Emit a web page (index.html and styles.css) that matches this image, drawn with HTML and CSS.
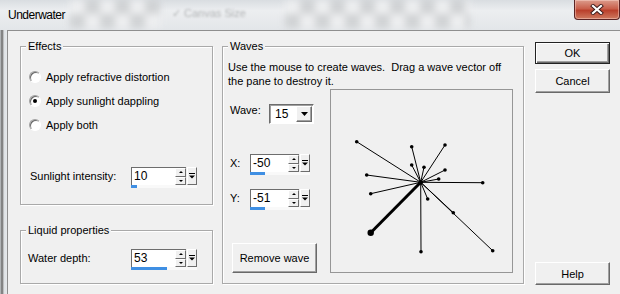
FILE: index.html
```html
<!DOCTYPE html>
<html lang="en">
<head>
  <meta charset="UTF-8" />
  <title>Underwater</title>
  <link rel="stylesheet" href="styles.css">
</head>
<body>
  <div class="window">
    <div class="titlebar">
      <span class="title">Underwater</span>
      <span class="glass glass-a"></span>
      <span class="ghost">&#10003; Canvas Size</span>
      <span class="glass glass-b"></span>
      <span class="close">
        <svg width="14" height="11" viewBox="0 0 14 11">
          <path d="M3 2 L11 9 M11 2 L3 9" stroke="#3a1a1a" stroke-width="4" stroke-linecap="square"/>
          <path d="M3 2 L11 9 M11 2 L3 9" stroke="#fff" stroke-width="2.2" stroke-linecap="square"/>
        </svg>
      </span>
    </div>

    <div class="frame">
      <div class="edge"></div>
      <div class="client">

        <div class="col-left">
          <div class="group effects">
            <span class="group-title">Effects</span>
            <div class="radio-row"><span class="radio"></span>Apply refractive distortion</div>
            <div class="radio-row"><span class="radio checked"></span>Apply sunlight dappling</div>
            <div class="radio-row"><span class="radio"></span>Apply both</div>

            <div class="field-row sunlight">
              <span class="field-label">Sunlight intensity:</span>
              <div class="spin">
                <div class="spin-top">
                  <span class="spin-edit">10</span>
                  <span class="spin-arrows"><i class="up"></i><i class="down"></i></span>
                  <span class="spin-drop">
                    <svg width="6" height="7" viewBox="0 0 6 7"><rect x="0" y="0" width="6" height="1" fill="#000"/><path d="M0 2.5 H6 L3 5.5 Z" fill="#000"/></svg>
                  </span>
                </div>
                <div class="spin-track"><span class="spin-fill" style="width:6px"></span></div>
              </div>
            </div>
          </div>

          <div class="group liquid">
            <span class="group-title">Liquid properties</span>
            <div class="field-row">
              <span class="field-label">Water depth:</span>
              <div class="spin">
                <div class="spin-top">
                  <span class="spin-edit">53</span>
                  <span class="spin-arrows"><i class="up"></i><i class="down"></i></span>
                  <span class="spin-drop">
                    <svg width="6" height="7" viewBox="0 0 6 7"><rect x="0" y="0" width="6" height="1" fill="#000"/><path d="M0 2.5 H6 L3 5.5 Z" fill="#000"/></svg>
                  </span>
                </div>
                <div class="spin-track"><span class="spin-fill" style="width:36px"></span></div>
              </div>
            </div>
          </div>
        </div>

        <div class="group waves">
          <span class="group-title">Waves</span>
          <div class="waves-text">Use the mouse to create waves.&nbsp; Drag a wave vector off<br>the pane to destroy it.</div>
          <div class="waves-body">
            <div class="wave-controls">
              <div class="wave-row">
                <span class="wave-label">Wave:</span>
                <div class="combo">
                  <span class="combo-value">15</span>
                  <span class="combo-btn"><svg width="7" height="4" viewBox="0 0 7 4"><path d="M0 0 H7 L3.5 4 Z" fill="#000"/></svg></span>
                </div>
              </div>

              <div class="xy-row">
                <span class="xy-label">X:</span>
                <div class="spin narrow">
                  <div class="spin-top">
                    <span class="spin-edit">-50</span>
                    <span class="spin-arrows"><i class="up"></i><i class="down"></i></span>
                    <span class="spin-drop">
                      <svg width="6" height="7" viewBox="0 0 6 7"><rect x="0" y="0" width="6" height="1" fill="#000"/><path d="M0 2.5 H6 L3 5.5 Z" fill="#000"/></svg>
                    </span>
                  </div>
                  <div class="spin-track"><span class="spin-fill" style="width:15px"></span></div>
                </div>
              </div>

              <div class="xy-row">
                <span class="xy-label">Y:</span>
                <div class="spin narrow">
                  <div class="spin-top">
                    <span class="spin-edit">-51</span>
                    <span class="spin-arrows"><i class="up"></i><i class="down"></i></span>
                    <span class="spin-drop">
                      <svg width="6" height="7" viewBox="0 0 6 7"><rect x="0" y="0" width="6" height="1" fill="#000"/><path d="M0 2.5 H6 L3 5.5 Z" fill="#000"/></svg>
                    </span>
                  </div>
                  <div class="spin-track"><span class="spin-fill" style="width:15px"></span></div>
                </div>
              </div>

              <button class="btn remove">Remove wave</button>
            </div>

            <div class="pane">
              <svg width="181" height="182" viewBox="0 0 181 182">
                <g stroke="#000" stroke-width="1">
                  <line x1="89.7" y1="92.3" x2="25.7" y2="51.7"/>
                  <line x1="89.7" y1="92.3" x2="80.7" y2="56.7"/>
                  <line x1="89.7" y1="92.3" x2="114" y2="55"/>
                  <line x1="89.7" y1="92.3" x2="80.7" y2="75"/>
                  <line x1="89.7" y1="92.3" x2="93" y2="77.3"/>
                  <line x1="89.7" y1="92.3" x2="114" y2="80"/>
                  <line x1="89.7" y1="92.3" x2="107.7" y2="89"/>
                  <line x1="89.7" y1="92.3" x2="35.7" y2="85"/>
                  <line x1="89.7" y1="92.3" x2="151.7" y2="92.7"/>
                  <line x1="89.7" y1="92.3" x2="39.7" y2="103.7"/>
                  <line x1="89.7" y1="92.3" x2="96.7" y2="109"/>
                  <line x1="89.7" y1="92.3" x2="122.3" y2="122.7"/>
                  <line x1="89.7" y1="92.3" x2="161.7" y2="160.7"/>
                  <line x1="89.7" y1="92.3" x2="90" y2="161.7"/>
                  <line x1="89.7" y1="92.3" x2="39.7" y2="142.7" stroke-width="3"/>
                </g>
                <g fill="#000">
                  <circle cx="89.7" cy="92.3" r="2.2"/>
                  <circle cx="25.7" cy="51.7" r="1.8"/>
                  <circle cx="80.7" cy="56.7" r="1.8"/>
                  <circle cx="114" cy="55" r="1.8"/>
                  <circle cx="80.7" cy="75" r="1.8"/>
                  <circle cx="93" cy="77.3" r="1.8"/>
                  <circle cx="114" cy="80" r="1.8"/>
                  <circle cx="107.7" cy="89" r="1.8"/>
                  <circle cx="35.7" cy="85" r="1.8"/>
                  <circle cx="151.7" cy="92.7" r="1.8"/>
                  <circle cx="39.7" cy="103.7" r="1.8"/>
                  <circle cx="96.7" cy="109" r="1.8"/>
                  <circle cx="122.3" cy="122.7" r="1.8"/>
                  <circle cx="161.7" cy="160.7" r="1.8"/>
                  <circle cx="90" cy="161.7" r="1.8"/>
                  <circle cx="39.7" cy="142.7" r="3.2"/>
                </g>
              </svg>
            </div>
          </div>
        </div>

        <div class="buttons">
          <button class="btn btn-default ok">OK</button>
          <button class="btn cancel">Cancel</button>
          <button class="btn help">Help</button>
        </div>

      </div>
    </div>
  </div>
</body>
</html>
```

FILE: styles.css
```css
html, body {
  margin: 0;
  padding: 0;
}

body {
  width: 620px;
  height: 294px;
  overflow: hidden;
  font-family: "Liberation Sans", Arial, sans-serif;
  font-size: 11px;
  color: #000;
  background: #f0f0f0;
}

.window {
  display: flex;
  flex-direction: column;
  height: 294px;
}

/* title bar with blurred glass behind it */
.titlebar {
  flex: none;
  height: 30px;
  display: flex;
  align-items: flex-start;
  overflow: hidden;
  background: linear-gradient(#d9dde1, #eceef0 35%, #e3e6e9);
}

.title {
  width: 70px;
  box-sizing: border-box;
  padding-left: 8px;
  line-height: 30px;
  font-size: 12px;
  letter-spacing: -0.5px;
  white-space: nowrap;
}

.glass {
  height: 28px;
  background: repeating-conic-gradient(#cbcdcf 0 25%, #eff0f1 0 50%) 0 0 / 30px 28px;
  filter: blur(3.5px);
  opacity: 0.8;
}

.glass-a {
  width: 90px;
}

.ghost {
  margin-left: 12px;
  width: 68px;
  line-height: 26px;
  color: #b3b5b7;
  white-space: nowrap;
  filter: blur(1.2px);
}

.glass-b {
  margin-left: 45px;
  width: 185px;
}

.close {
  margin-left: auto;
  width: 46px;
  height: 20px;
  box-sizing: border-box;
  border: 1px solid #5a2424;
  border-top: none;
  border-radius: 0 0 4px 4px;
  background: linear-gradient(#dc9c8c, #c9604c 45%, #b9402c 55%, #cf7a60);
  box-shadow: inset 0 0 0 1px rgba(255, 220, 210, 0.45);
  display: flex;
  align-items: center;
  justify-content: center;
}

/* window body */
.frame {
  flex: 1;
  display: flex;
}

.edge {
  width: 7px;
  background: linear-gradient(to right, #c9cdd0, #6a6a6a 2px, #9c9c9c 3px, #dde1e4 4px, #e6e9ec);
}

.client {
  flex: 1;
  display: flex;
  align-items: flex-start;
  border-top: 1px solid #8e8e8e;
  border-left: 1px solid #8e8e8e;
  padding: 15px 0 0 12px;
  background: #f0f0f0;
}

.col-left {
  width: 193px;
  display: flex;
  flex-direction: column;
}

.group {
  position: relative;
  box-sizing: border-box;
  border: 1px solid #a9a9a9;
  box-shadow: 1px 1px 0 #fff, inset 1px 1px 0 #fff;
}

.group-title {
  position: absolute;
  top: -8px;
  left: 5px;
  padding: 0 2px;
  line-height: 14px;
  background: #f0f0f0;
}

.effects {
  height: 159px;
  padding: 18px 0 0 8px;
}

.liquid {
  height: 54px;
  margin-top: 25px;
  padding: 18px 0 0 7px;
}

.radio-row {
  display: flex;
  align-items: center;
  height: 24px;
}

.radio {
  width: 12px;
  height: 12px;
  box-sizing: border-box;
  margin-right: 5px;
  border-radius: 50%;
  border: 1px solid;
  border-color: #a0a0a0 #fff #fff #a0a0a0;
  box-shadow: inset 1px 1px 0 #696969;
  background: #fff;
  display: flex;
  align-items: center;
  justify-content: center;
}

.radio.checked::after {
  content: "";
  width: 4px;
  height: 4px;
  border-radius: 50%;
  background: #000;
}

.field-row {
  display: flex;
  align-items: flex-start;
}

.field-label {
  width: 103px;
  line-height: 18px;
}

.sunlight {
  margin-top: 30px;
}

.sunlight .field-label {
  width: 101px;
  padding-left: 1px;
}

/* spin box with slider track */
.spin {
  display: flex;
  flex-direction: column;
}

.spin-top {
  display: flex;
  height: 18px;
}

.spin-edit {
  width: 44px;
  box-sizing: border-box;
  border-top: 1px solid #6d6d6d;
  border-left: 1px solid #6d6d6d;
  background: #fff;
  padding-left: 2px;
  font-size: 12px;
  line-height: 17px;
}

.narrow .spin-edit {
  width: 38px;
}

.spin-arrows {
  width: 11px;
  display: flex;
  flex-direction: column;
  background: #fff;
  border-top: 1px solid #6d6d6d;
}

.spin-arrows i {
  flex: 1;
  box-sizing: border-box;
  border: 1px solid;
  border-color: #fff #6d6d6d #6d6d6d #fff;
  background: #f0f0f0;
  display: flex;
  align-items: center;
  justify-content: center;
}

.spin-arrows i::after {
  content: "";
  border-left: 2px solid transparent;
  border-right: 2px solid transparent;
}

.spin-arrows .up::after {
  border-bottom: 2px solid #000;
}

.spin-arrows .down::after {
  border-top: 2px solid #000;
}

.spin-drop {
  width: 10px;
  margin-left: 1px;
  box-sizing: border-box;
  border: 1px solid;
  border-color: #fff #6d6d6d #6d6d6d #fff;
  background: #f0f0f0;
  display: flex;
  align-items: center;
  justify-content: center;
}

.spin-track {
  height: 3px;
  background: #f9f9f9;
}

.spin-fill {
  display: block;
  height: 3px;
  background: #3f8fe3;
}

/* waves */
.waves {
  width: 302px;
  height: 238px;
  margin-left: 9px;
  padding: 13px 0 0 5px;
}

.waves-text {
  line-height: 14px;
  white-space: nowrap;
}

.waves-body {
  display: flex;
  padding-left: 2px;
}

.wave-controls {
  width: 100px;
  display: flex;
  flex-direction: column;
}

.wave-row {
  display: flex;
  align-items: flex-start;
  margin-top: 16px;
}

.wave-label {
  width: 39px;
  line-height: 12px;
}

.combo {
  width: 45px;
  height: 20px;
  box-sizing: border-box;
  border: 1px solid;
  border-color: #6d6d6d #fff #fff #6d6d6d;
  box-shadow: inset 1px 1px 0 #a0a0a0;
  background: #fff;
  display: flex;
  align-items: center;
}

.combo-value {
  flex: 1;
  padding-left: 5px;
  font-size: 12px;
}

.combo-btn {
  width: 16px;
  height: 16px;
  margin-right: 1px;
  box-sizing: border-box;
  border: 1px solid;
  border-color: #fff #6d6d6d #6d6d6d #fff;
  box-shadow: inset -1px -1px 0 #a0a0a0;
  background: #f0f0f0;
  display: flex;
  align-items: center;
  justify-content: center;
}

.xy-row {
  display: flex;
  align-items: flex-start;
  margin-top: 30px;
}

.xy-row + .xy-row {
  margin-top: 14px;
}

.xy-label {
  width: 20px;
  line-height: 18px;
}

.pane {
  margin-top: 1px;
  width: 183px;
  height: 184px;
  box-sizing: border-box;
  border: 1px solid #969696;
  background: #f0f0f0;
}

.pane svg {
  display: block;
}

/* push buttons */
.btn {
  box-sizing: border-box;
  padding: 0;
  border: 1px solid;
  border-color: #fff #696969 #696969 #fff;
  box-shadow: inset -1px -1px 0 #a0a0a0;
  background: #f0f0f0;
  font: inherit;
  color: #000;
  display: flex;
  align-items: center;
  justify-content: center;
}

.btn-default {
  border-color: #222;
  box-shadow: inset 1px 1px 0 #fff, inset -1px -1px 0 #696969, inset -2px -2px 0 #a0a0a0;
}

.remove {
  margin-top: 33px;
  margin-left: 2px;
  width: 85px;
  height: 30px;
}

.buttons {
  width: 75px;
  margin-left: 11px;
  margin-top: -4px;
  display: flex;
  flex-direction: column;
}

.ok {
  height: 22px;
}

.cancel {
  margin-top: 5px;
  height: 24px;
}

.help {
  margin-top: 169px;
  height: 23px;
}
```
